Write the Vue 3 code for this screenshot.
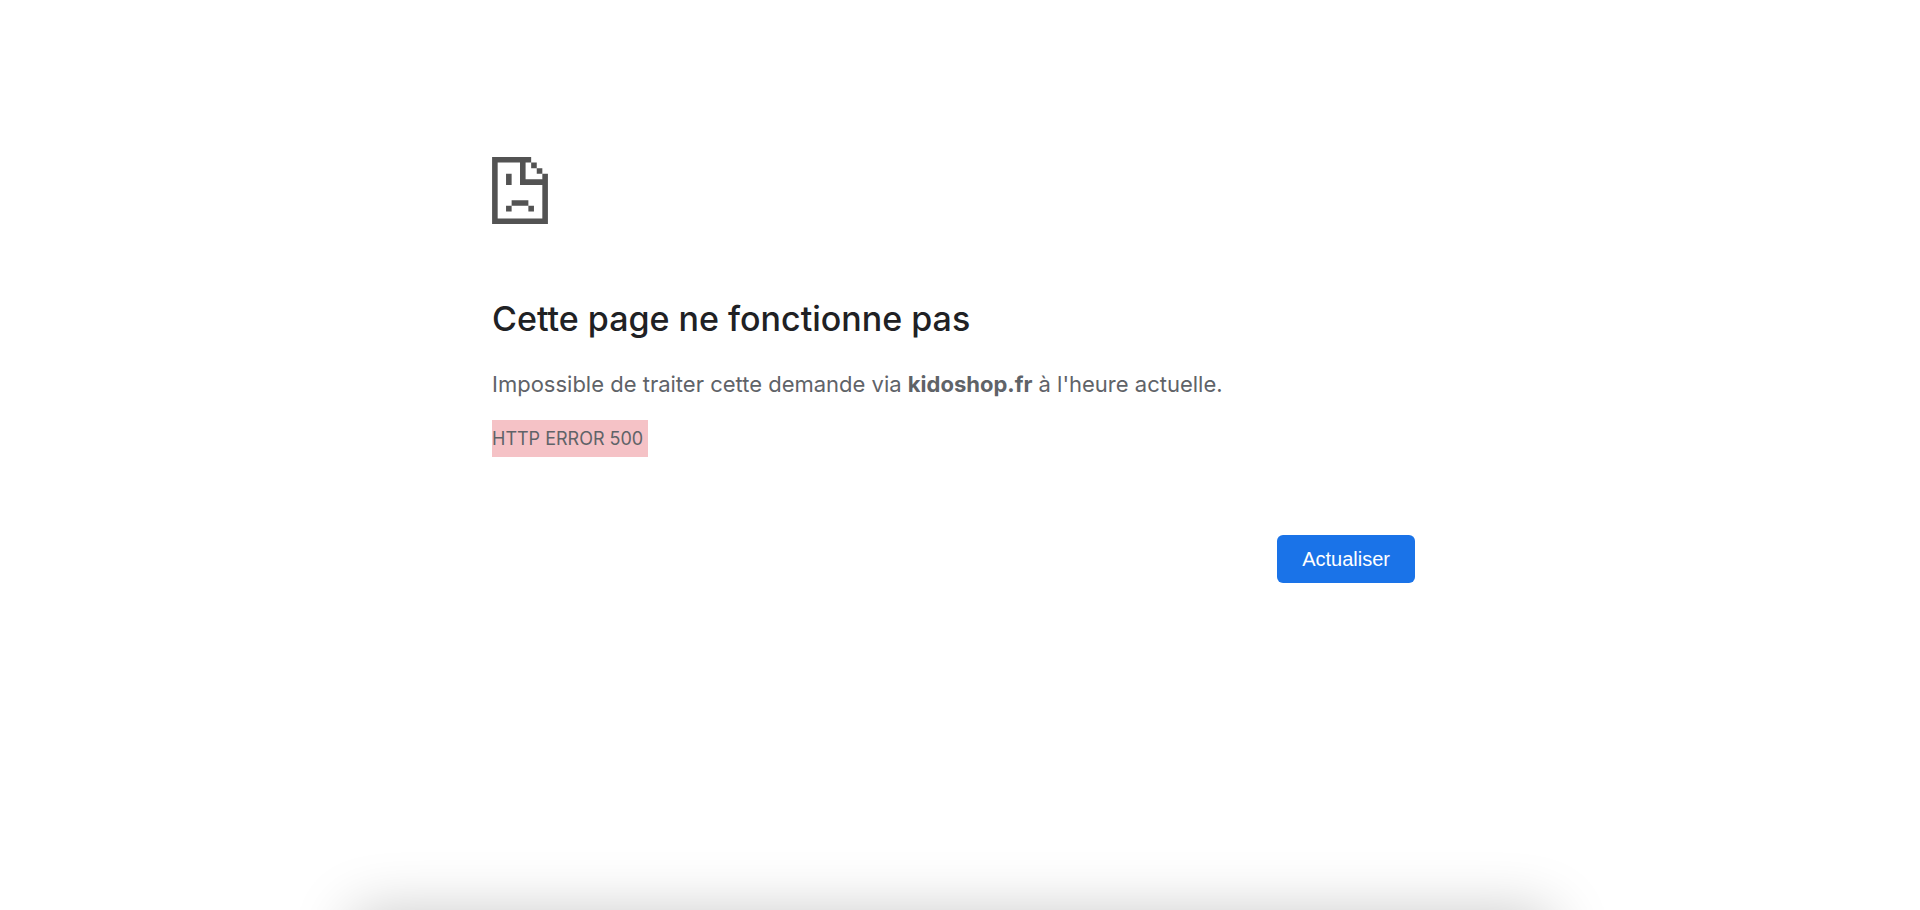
<script setup>
function reload() {
  window.location.reload()
}
</script>

<template>
  <div class="page">
    <main class="error">
      <svg class="icon" viewBox="0 0 40 48" role="img" aria-label="Page en erreur">
        <path
          fill="currentColor"
          fill-rule="evenodd"
          d="M0 0H28V4H24V16H36V12H40V48H0ZM4 4V44H36V20H20V4ZM28 4H32V8H28ZM32 8H36V12H32ZM10 12H14V20H10ZM14 31H26V35H14ZM10 35H14V39H10ZM26 35H30V39H26Z"
        />
      </svg>
      <h1>Cette page ne fonctionne pas</h1>
      <p class="summary">
        Impossible de traiter cette demande via <strong>kidoshop.fr</strong> à l'heure actuelle.
      </p>
      <div class="code"><span>HTTP ERROR 500</span></div>
      <div class="actions">
        <button type="button" @click="reload">Actualiser</button>
      </div>
    </main>
    <div class="bottom-shade" aria-hidden="true"><div class="panel"></div></div>
  </div>
</template>

<style>
body {
  margin: 0;
  background: #fff;
}
</style>

<style scoped>
.page {
  padding: 157px 13px 0 0;
  color: #5f6368;
  font-family: Inter, "Liberation Sans", sans-serif;
}

.error {
  width: 90%;
  max-width: 923px;
  margin: 0 auto;
}

.icon {
  display: block;
  width: 56px;
  height: 67px;
  color: #535353;
}

h1 {
  margin: 72px 0 0;
  color: #202124;
  font-size: 34px;
  font-weight: 500;
  line-height: 46px;
}

.summary {
  margin: 24px 0 0;
  font-size: 22px;
  line-height: 36px;
}

.code {
  margin-top: 18px;
  font-size: 18px;
  line-height: 37px;
}

.code span {
  display: inline-block;
  min-width: 156px;
  background: #f5c2c6;
}

.actions {
  display: flex;
  justify-content: flex-end;
  margin-top: 78px;
}

button {
  padding: 0 25px;
  border: 0;
  border-radius: 6px;
  background: #1a73e8;
  color: #fff;
  font-family: "Liberation Sans", Arial, sans-serif;
  font-size: 20px;
  line-height: 48px;
  cursor: pointer;
}

.bottom-shade {
  position: fixed;
  right: 16px;
  bottom: 0;
  left: 0;
  height: 100px;
  overflow: hidden;
  pointer-events: none;
}

.panel {
  width: 63%;
  height: 100px;
  margin: 102px auto 0;
  border-radius: 12px;
  box-shadow: 0 0 60px rgba(0, 0, 0, 0.22);
}
</style>
